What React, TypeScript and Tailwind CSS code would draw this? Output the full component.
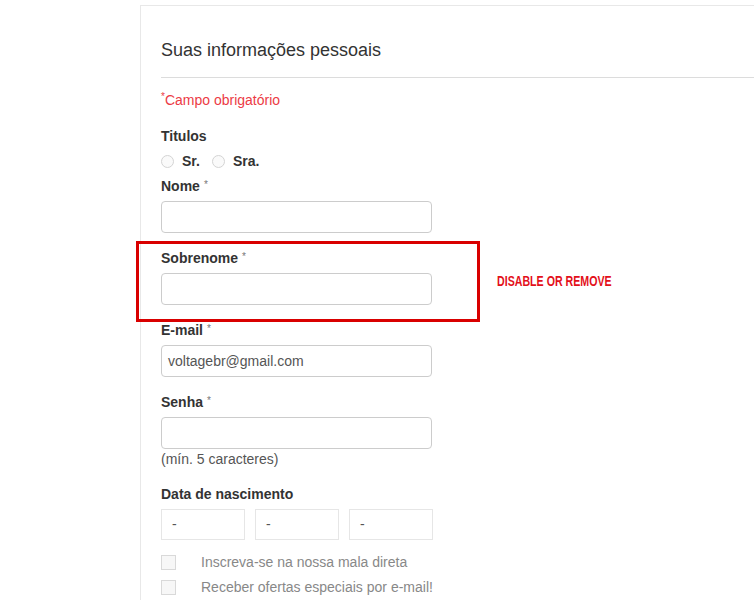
import React from "react";

const Star = () => (
  <sup className="ml-[4px] text-[10px] font-normal text-[#777] relative top-[-3px]">*</sup>
);

const Label = ({ children, star }: { children: React.ReactNode; star?: boolean }) => (
  <div className="h-[20px] leading-[20px] text-[14px] font-bold text-[#333]">
    {children}
    {star && <Star />}
  </div>
);

const Input = ({ value }: { value?: string }) => (
  <div className="mt-[5px] h-[32px] w-[271px] rounded-[4px] border border-[#ccc] bg-white px-[6px] text-[14px] leading-[30px] text-[#555]">
    {value}
  </div>
);

const Radio = ({ label }: { label: string }) => (
  <div className="flex items-center">
    <span className="h-[13px] w-[13px] rounded-full border border-[#d4d4d4] bg-[#fafafa]" />
    <span className="ml-[8px] text-[14px] font-bold text-[#333]">{label}</span>
  </div>
);

const Check = ({ label }: { label: string }) => (
  <div className="flex h-[25px] items-center">
    <span className="h-[15px] w-[15px] border border-[#d9d9d9] bg-[#f7f7f7]" />
    <span className="ml-[25px] text-[14px] text-[#888]">{label}</span>
  </div>
);

export default function App() {
  return (
    <div
      className="relative h-[609px] w-[754px] overflow-hidden bg-white"
      style={{ fontFamily: '"Liberation Sans", Arial, sans-serif' }}
    >
      <div className="ml-[140px] mt-[5px] w-[700px] border-l border-t border-[#e8e8e8] pl-[20px]">
        <h2 className="pt-[34px] h-[54px] text-[18px] leading-[20px] text-[#333]">
          Suas informações pessoais
        </h2>
        <div className="mt-[17px] border-t border-[#dcdcdc]" />
        <div className="mt-[12px] h-[20px] text-[14px] leading-[20px] text-[#ec3b45]">
          <span className="relative top-[-5px] text-[10px]">*</span>Campo obrigatório
        </div>
        <div className="mt-[16px]">
          <Label>Titulos</Label>
        </div>
        <div className="mt-[5px] flex h-[20px] items-center gap-[12px]">
          <Radio label="Sr." />
          <Radio label="Sra." />
        </div>
        <div className="mt-[5px]">
          <Label star>Nome</Label>
          <Input />
        </div>
        <div className="mt-[15px]">
          <Label star>Sobrenome</Label>
          <Input />
        </div>
        <div className="mt-[15px]">
          <Label star>E-mail</Label>
          <Input value="voltagebr@gmail.com" />
        </div>
        <div className="mt-[15px]">
          <Label star>Senha</Label>
          <Input />
          <div className="h-[20px] text-[14px] leading-[20px] text-[#555]">(mín. 5 caracteres)</div>
        </div>
        <div className="mt-[15px]">
          <Label>Data de nascimento</Label>
          <div className="mt-[5px] flex gap-[10px]">
            {[0, 1, 2].map((i) => (
              <div
                key={i}
                className="h-[31px] w-[84px] border border-[#e6e6e6] px-[10px] text-[14px] leading-[29px] text-[#555]"
              >
                -
              </div>
            ))}
          </div>
        </div>
        <div className="mt-[10px]">
          <Check label="Inscreva-se na nossa mala direta" />
          <Check label="Receber ofertas especiais por e-mail!" />
        </div>
      </div>

      <div className="absolute left-[136px] top-[241px] h-[81px] w-[344px] border-[3px] border-[#d90000]" />
      <div className="absolute left-[497px] top-[272px] h-[18px] text-[14px] font-bold leading-[18px] text-[#e3101a]">
        <span className="inline-block origin-left scale-x-[0.76] whitespace-nowrap">DISABLE OR REMOVE</span>
      </div>
    </div>
  );
}
